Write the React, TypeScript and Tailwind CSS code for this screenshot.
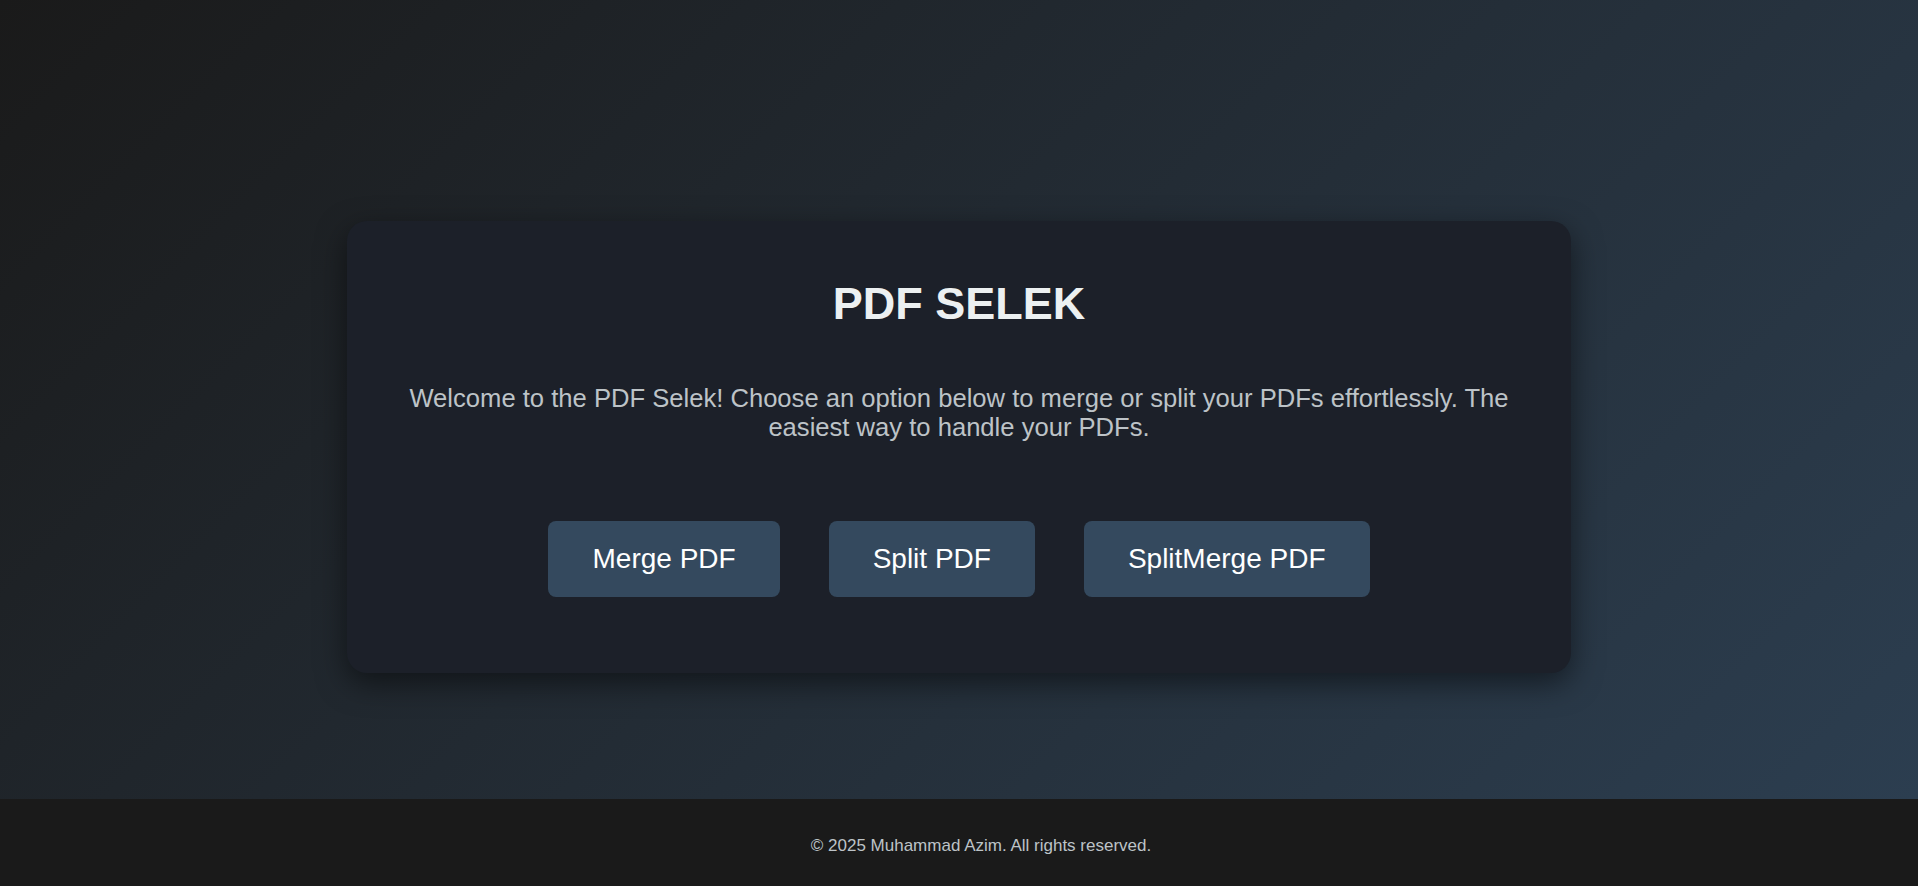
const buttons = ["Merge PDF", "Split PDF", "SplitMerge PDF"];

const App = () => {
  return (
    <div
      className="min-h-screen flex flex-col bg-[#1a1a1a]"
      style={{ fontFamily: '"Liberation Sans", Arial, sans-serif' }}
    >
      <main className="h-[799px] flex justify-center pt-[221px] bg-[linear-gradient(135deg,#1a1a1a,#2c3e50)]">
        <div className="w-[1224px] h-[452px] rounded-[20px] bg-[#1c2029] px-[40px] pt-[57px] text-center shadow-[0_10px_30px_rgba(0,0,0,0.5)]">
          <h1 className="text-[45px] leading-[1.15] font-bold text-[#ecf0f1]">
            PDF SELEK
          </h1>
          <p className="mt-[54px] text-[25.6px] leading-[1.15] text-[#bdc3c7]">
            Welcome to the PDF Selek! Choose an option below to merge or split
            your PDFs effortlessly. The easiest way to handle your PDFs.
          </p>
          <div className="mt-[78px] flex justify-center gap-[49px]">
            {buttons.map((label) => (
              <button
                key={label}
                className="h-[76px] px-[44px] rounded-lg bg-[#34495e] text-white text-[28px] cursor-pointer hover:bg-[#3d566e]"
              >
                {label}
              </button>
            ))}
          </div>
        </div>
      </main>

      <footer className="h-[87px] pt-[37px] pl-[44px] bg-[#1a1a1a] text-center">
        <p className="text-[17px] leading-[1.15] text-[#bdc3c7]">
          © 2025 Muhammad Azim. All rights reserved.
        </p>
      </footer>
    </div>
  );
};

export default App;
